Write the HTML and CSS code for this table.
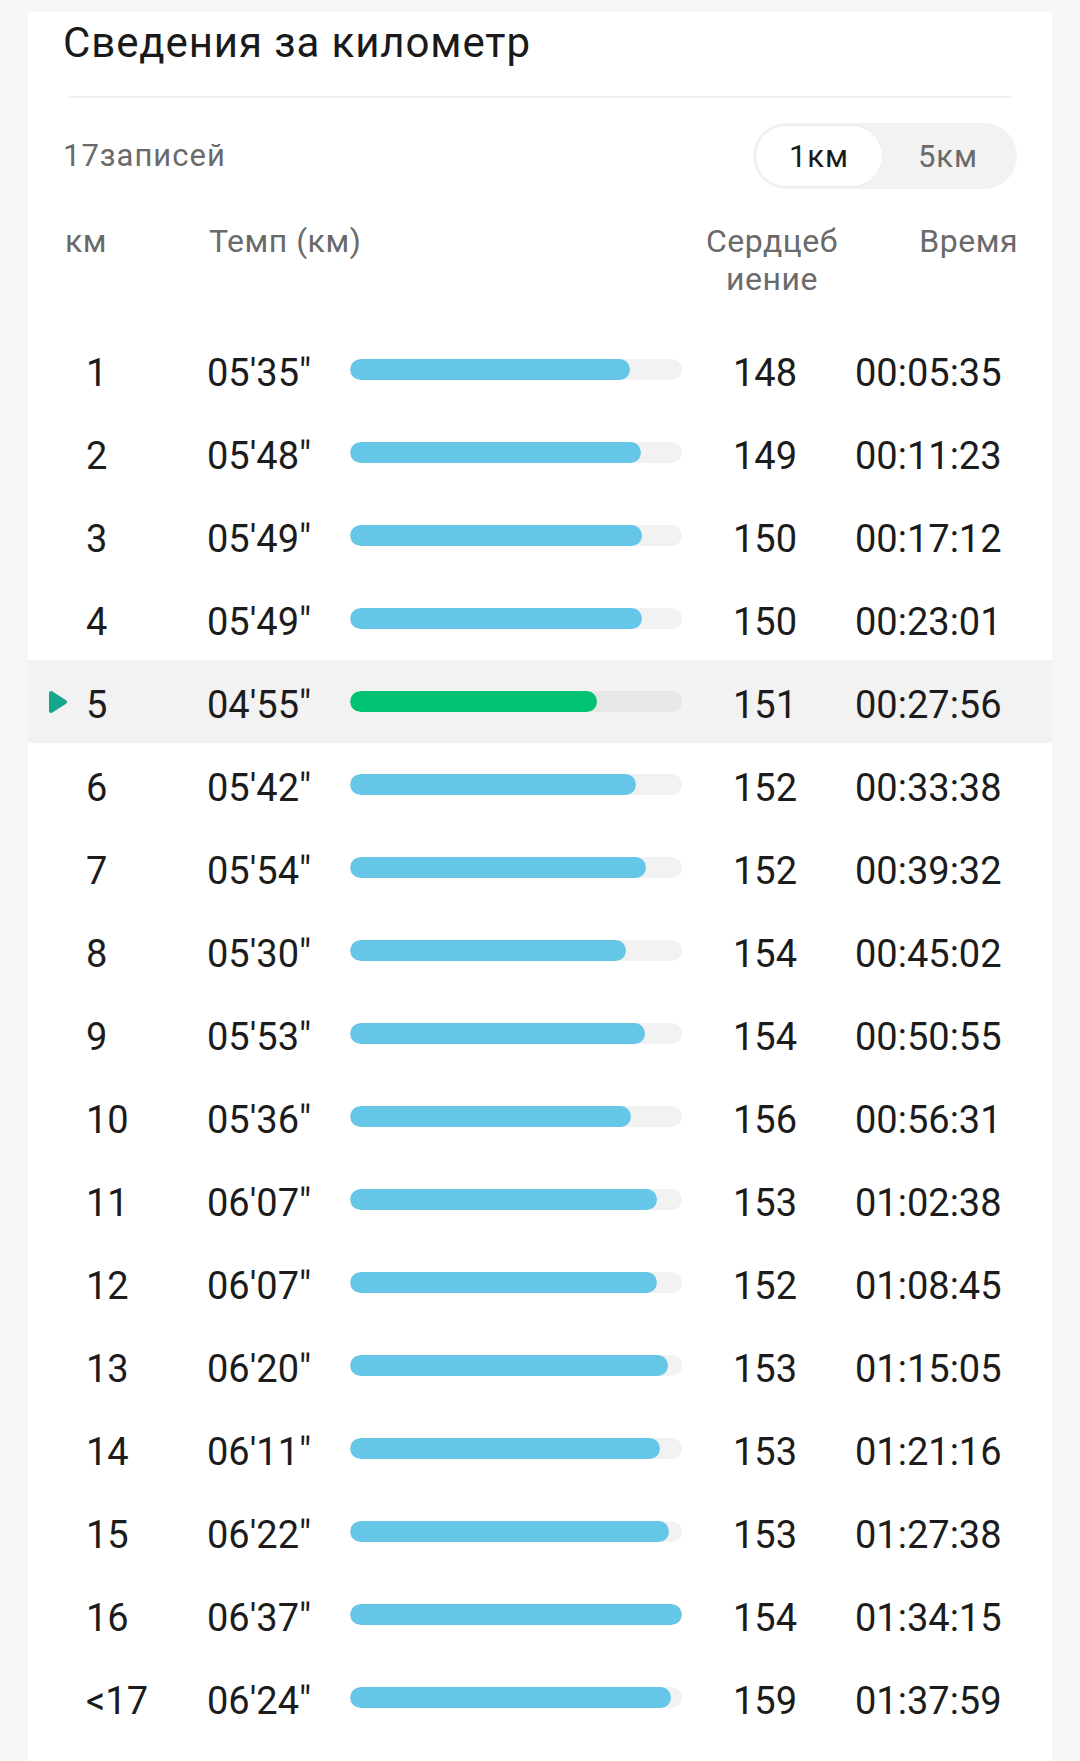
FILE: index.html
```html
<!DOCTYPE html>
<html lang="ru">
<head>
<meta charset="utf-8">
<title>Сведения за километр</title>
<link rel="stylesheet" href="styles.css">
</head>
<body>
<main class="card">
  <h1 class="title">Сведения за километр</h1>
  <div class="divider"></div>
  <div class="toolbar">
    <span class="count">17записей</span>
    <div class="segment">
      <span class="seg-item active">1км</span>
      <span class="seg-item">5км</span>
    </div>
  </div>
  <div class="thead">
    <span>км</span>
    <span>Темп (км)</span>
    <span class="th-hr">Сердцебиение</span>
    <span class="th-time">Время</span>
  </div>
  <div class="rows">
    <div class="row"><span class="mark"></span><span class="cell">1</span><span class="cell">05'35"</span><div class="track"><div class="fill" style="width:84.38%"></div></div><span class="cell">148</span><span class="cell">00:05:35</span></div>
    <div class="row"><span class="mark"></span><span class="cell">2</span><span class="cell">05'48"</span><div class="track"><div class="fill" style="width:87.66%"></div></div><span class="cell">149</span><span class="cell">00:11:23</span></div>
    <div class="row"><span class="mark"></span><span class="cell">3</span><span class="cell">05'49"</span><div class="track"><div class="fill" style="width:87.91%"></div></div><span class="cell">150</span><span class="cell">00:17:12</span></div>
    <div class="row"><span class="mark"></span><span class="cell">4</span><span class="cell">05'49"</span><div class="track"><div class="fill" style="width:87.91%"></div></div><span class="cell">150</span><span class="cell">00:23:01</span></div>
    <div class="row current"><span class="mark"><svg class="tri" viewBox="0 0 20 24" width="20" height="24"><path d="M3 3 L17 12 L3 21 Z" fill="#14a78b" stroke="#14a78b" stroke-width="4" stroke-linejoin="round"/></svg></span><span class="cell">5</span><span class="cell">04'55"</span><div class="track"><div class="fill" style="width:74.31%"></div></div><span class="cell">151</span><span class="cell">00:27:56</span></div>
    <div class="row"><span class="mark"></span><span class="cell">6</span><span class="cell">05'42"</span><div class="track"><div class="fill" style="width:86.15%"></div></div><span class="cell">152</span><span class="cell">00:33:38</span></div>
    <div class="row"><span class="mark"></span><span class="cell">7</span><span class="cell">05'54"</span><div class="track"><div class="fill" style="width:89.17%"></div></div><span class="cell">152</span><span class="cell">00:39:32</span></div>
    <div class="row"><span class="mark"></span><span class="cell">8</span><span class="cell">05'30"</span><div class="track"><div class="fill" style="width:83.12%"></div></div><span class="cell">154</span><span class="cell">00:45:02</span></div>
    <div class="row"><span class="mark"></span><span class="cell">9</span><span class="cell">05'53"</span><div class="track"><div class="fill" style="width:88.92%"></div></div><span class="cell">154</span><span class="cell">00:50:55</span></div>
    <div class="row"><span class="mark"></span><span class="cell">10</span><span class="cell">05'36"</span><div class="track"><div class="fill" style="width:84.63%"></div></div><span class="cell">156</span><span class="cell">00:56:31</span></div>
    <div class="row"><span class="mark"></span><span class="cell">11</span><span class="cell">06'07"</span><div class="track"><div class="fill" style="width:92.44%"></div></div><span class="cell">153</span><span class="cell">01:02:38</span></div>
    <div class="row"><span class="mark"></span><span class="cell">12</span><span class="cell">06'07"</span><div class="track"><div class="fill" style="width:92.44%"></div></div><span class="cell">152</span><span class="cell">01:08:45</span></div>
    <div class="row"><span class="mark"></span><span class="cell">13</span><span class="cell">06'20"</span><div class="track"><div class="fill" style="width:95.72%"></div></div><span class="cell">153</span><span class="cell">01:15:05</span></div>
    <div class="row"><span class="mark"></span><span class="cell">14</span><span class="cell">06'11"</span><div class="track"><div class="fill" style="width:93.45%"></div></div><span class="cell">153</span><span class="cell">01:21:16</span></div>
    <div class="row"><span class="mark"></span><span class="cell">15</span><span class="cell">06'22"</span><div class="track"><div class="fill" style="width:96.22%"></div></div><span class="cell">153</span><span class="cell">01:27:38</span></div>
    <div class="row"><span class="mark"></span><span class="cell">16</span><span class="cell">06'37"</span><div class="track"><div class="fill" style="width:100%"></div></div><span class="cell">154</span><span class="cell">01:34:15</span></div>
    <div class="row"><span class="mark"></span><span class="cell">&lt;17</span><span class="cell">06'24"</span><div class="track"><div class="fill" style="width:96.73%"></div></div><span class="cell">159</span><span class="cell">01:37:59</span></div>
  </div>
</main>
</body>
</html>
```

FILE: styles.css
```css
html {
  background: #f6f6f6;
}
body {
  margin: 0;
  font-family: Roboto, "Noto Sans", "Liberation Sans", sans-serif;
  color: #1c1c1c;
}
.card {
  margin: 12px 28px 0 28px;
  background: #ffffff;
  padding: 7px 0 22px 0;
}
.title {
  margin: 0;
  padding-left: 35px;
  font-size: 42px;
  line-height: 48px;
  font-weight: 400;
  letter-spacing: 0.9px;
  color: #1a1a1a;
}
.divider {
  margin: 29px 41px 0 41px;
  height: 2px;
  background: #efefef;
}
.toolbar {
  margin-top: 25px;
  height: 66px;
  padding: 0 35px 0 35px;
  display: flex;
  align-items: center;
  justify-content: space-between;
}
.count {
  font-size: 31px;
  line-height: 36px;
  letter-spacing: 1px;
  color: #6a6a6a;
}
.segment {
  display: flex;
  width: 264px;
  height: 66px;
  box-sizing: border-box;
  padding: 3px;
  border-radius: 33px;
  background: #f2f2f2;
}
.seg-item {
  flex: 1;
  display: flex;
  align-items: center;
  justify-content: center;
  font-size: 31px;
  letter-spacing: 1px;
  color: #6a6a6a;
  border-radius: 30px;
}
.seg-item.active {
  flex: 0 0 126px;
  background: #ffffff;
  color: #1a1a1a;
  box-shadow: 0 0 0 1px #ececec;
}
.thead {
  margin-top: 33px;
  height: 106px;
  padding: 0 34px 0 37px;
  display: grid;
  grid-template-columns: 144px 1fr 140px 176px;
  align-items: start;
  font-size: 32px;
  line-height: 38px;
  letter-spacing: 0.5px;
  color: #6a6a6a;
}
.th-hr {
  text-align: center;
  word-break: break-all;
}
.th-time {
  text-align: right;
}
.row {
  height: 83px;
  display: grid;
  grid-template-columns: 58px 121px 143px 332px 51px 122px 1fr;
  align-items: center;
  font-size: 38px;
  color: #1c1c1c;
}
.row.current {
  background: #f2f2f2;
}
.mark {
  display: flex;
  align-items: center;
  padding-left: 20px;
}
.tri {
  display: block;
}
.cell {
  line-height: 44px;
  padding-top: 7px;
}
.cell:nth-of-type(4) {
  grid-column: 6;
}
.track {
  height: 21px;
  border-radius: 11px;
  background: #f2f2f2;
  overflow: hidden;
}
.current .track {
  background: #e7e7e7;
}
.fill {
  height: 100%;
  border-radius: 11px;
  background: #66c6e8;
}
.current .fill {
  background: #00c372;
}
```
